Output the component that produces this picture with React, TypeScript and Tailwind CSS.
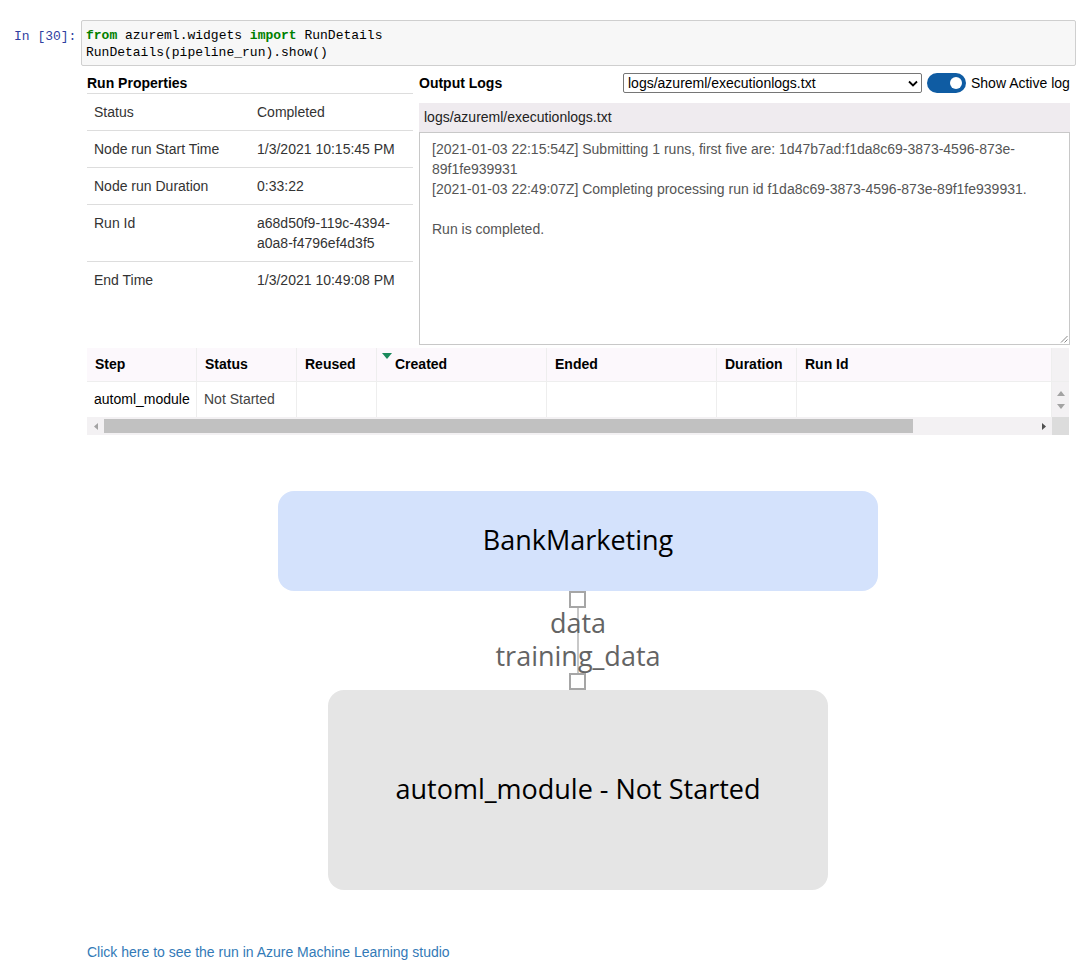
import type { ReactNode } from 'react'

// ─── Data ────────────────────────────────────────────────
const RUN_PROPS: [string, ReactNode][] = [
  ['Status', 'Completed'],
  ['Node run Start Time', '1/3/2021 10:15:45 PM'],
  ['Node run Duration', '0:33:22'],
  ['Run Id', <>a68d50f9-119c-4394-<br />a0a8-f4796ef4d3f5</>],
  ['End Time', '1/3/2021 10:49:08 PM'],
]

const COLUMNS = [
  { name: 'Step', w: 'w-[110px]' },
  { name: 'Status', w: 'w-[100px]' },
  { name: 'Reused', w: 'w-[80px]' },
  { name: 'Created', w: 'w-[170px]', sorted: true },
  { name: 'Ended', w: 'w-[170px]' },
  { name: 'Duration', w: 'w-[80px]' },
  { name: 'Run Id', w: 'w-[255px]' },
]

const ROW = ['automl_module', 'Not Started', '', '', '', '', '']

// ─── Code cell ───────────────────────────────────────────
function CodeCell() {
  return (
    <div className="flex font-['Liberation_Mono',monospace] text-[13px] leading-[17px]">
      <div className="w-[81px] shrink-0 pl-[14px] pt-[8px] text-[#303f9f]">In&nbsp;[30]:</div>
      <div className="w-[995px] border border-[#cfcfcf] bg-[#f7f7f7] rounded-[2px] px-[4px] pt-[6px] pb-[4px] text-black whitespace-pre">
        <div><span className="text-[#008000] font-bold">from</span> azureml.widgets <span className="text-[#008000] font-bold">import</span> RunDetails</div>
        <div>RunDetails(pipeline_run).show()</div>
      </div>
    </div>
  )
}

// ─── Run properties ─────────────────────────────────────
function RunProperties() {
  return (
    <div className="w-[326px] shrink-0">
      <div className="h-[21px] leading-[20px] font-bold text-black border-b border-[#ddd]">Run Properties</div>
      {RUN_PROPS.map(([k, v], i) => (
        <div key={k} className={`flex py-2 leading-[20px] text-[#333] ${i < RUN_PROPS.length - 1 ? 'border-b border-[#ddd]' : ''}`}>
          <div className="w-[170px] pl-[7px]">{k}</div>
          <div className="flex-1">{v}</div>
        </div>
      ))}
    </div>
  )
}

// ─── Output logs ────────────────────────────────────────
function OutputLogs() {
  return (
    <div className="w-[651px] shrink-0 flex flex-col">
      <div className="flex items-center h-[20px]">
        <div className="font-bold text-black w-[204px]">Output Logs</div>
        <div className="w-[299px] h-[20px] border border-[#767676] rounded-[2px] flex items-center justify-between pl-[4px] pr-[3px] text-black bg-white">
          <span>logs/azureml/executionlogs.txt</span>
          <svg width="10" height="7" viewBox="0 0 10 7" fill="none" stroke="#000" strokeWidth="1.8">
            <path d="M1 1.5l4 4 4-4" />
          </svg>
        </div>
        <div className="ml-[5px] w-[39px] h-[20px] rounded-full bg-[#0f5ca3] relative shrink-0">
          <div className="absolute right-[4px] top-[4px] w-[12px] h-[12px] rounded-full bg-white" />
        </div>
        <div className="ml-[5px] whitespace-nowrap text-black">Show Active log</div>
      </div>
      <div className="mt-[10px] h-[29px] bg-[#efebef] pl-[5px] leading-[29px] text-[#222]">logs/azureml/executionlogs.txt</div>
      <div className="relative h-[213px] border border-[#c8c8c8] bg-white pl-[12px] pt-[6px] pr-[40px] leading-[20px] text-[#555]">
        <div>[2021-01-03 22:15:54Z] Submitting 1 runs, first five are: 1d47b7ad:f1da8c69-3873-4596-873e-89f1fe939931</div>
        <div>[2021-01-03 22:49:07Z] Completing processing run id f1da8c69-3873-4596-873e-89f1fe939931.</div>
        <div className="h-[20px]" />
        <div>Run is completed.</div>
        <svg className="absolute right-[1px] bottom-[1px]" width="8" height="8" viewBox="0 0 8 8" stroke="#888" strokeWidth="1">
          <path d="M1 7.5L7.5 1M4.5 7.5L7.5 4.5" />
        </svg>
      </div>
    </div>
  )
}

// ─── Steps grid ─────────────────────────────────────────
function StepsGrid() {
  return (
    <div className="mt-[3px] w-[982px] text-[14px]">
      <div className="flex h-[34px] bg-[#fcf8fc] border-b border-[#eee]">
        {COLUMNS.map(c => (
          <div key={c.name} className={`${c.w} relative border-r border-[#eee] last:border-r-0 flex items-center font-bold text-black ${c.sorted ? 'pl-[18px]' : 'pl-[8px]'}`}>
            {c.sorted && (
              <svg className="absolute left-[5px] top-[5px]" width="10" height="6" viewBox="0 0 10 6">
                <path d="M0 0h10L5 6z" fill="#1a8a5c" />
              </svg>
            )}
            {c.name}
          </div>
        ))}
        <div className="w-[17px] bg-[#f3f1f3]" />
      </div>
      <div className="flex h-[35px] bg-white">
        {COLUMNS.map((c, i) => (
          <div key={c.name} className={`${c.w} border-r border-[#eee] flex items-center pl-[7px] ${i === 1 ? 'text-[#444]' : 'text-black'}`}>
            {ROW[i]}
          </div>
        ))}
        <div className="w-[17px] bg-[#f3f1f3] flex flex-col items-center justify-center gap-[8px]">
          <svg width="8" height="5" viewBox="0 0 8 5"><path d="M0 5h8L4 0z" fill="#a3a3a3" /></svg>
          <svg width="8" height="5" viewBox="0 0 8 5"><path d="M0 0h8L4 5z" fill="#a3a3a3" /></svg>
        </div>
      </div>
      <div className="flex h-[18px] bg-[#f3f1f3]">
        <div className="w-[17px] flex items-center justify-center">
          <svg width="4" height="7" viewBox="0 0 4 7"><path d="M4 0v7L0 3.5z" fill="#a3a3a3" /></svg>
        </div>
        <div className="flex-1 flex items-center">
          <div className="w-[809px] h-[14px] bg-[#c1c1c1]" />
        </div>
        <div className="w-[17px] flex items-center justify-center">
          <svg width="4" height="7" viewBox="0 0 4 7"><path d="M0 0v7L4 3.5z" fill="#505050" /></svg>
        </div>
        <div className="w-[17px] bg-[#dcdcdc]" />
      </div>
    </div>
  )
}

// ─── Pipeline graph ─────────────────────────────────────
function Port() {
  return <div className="w-[17px] h-[17px] border-2 border-[#a6a6a6] bg-white relative z-10" />
}

function PipelineGraph() {
  return (
    <div className="w-[982px] mt-[56px] flex flex-col items-center font-['Open_Sans',sans-serif] font-medium">
      <div className="w-[600px] h-[100px] rounded-[16px] bg-[#d4e2fc] flex items-center justify-center pb-[2px] text-[27px] text-black">
        BankMarketing
      </div>
      <div className="relative flex flex-col items-center">
        <div className="absolute left-1/2 -translate-x-1/2 top-0 bottom-0 w-[2px] bg-[#c8c8c8]" />
        <Port />
        <div className="relative text-[27px] leading-[33px] text-[#646464] text-center h-[65px] -top-[2px]">
          <div>data</div>
          <div>training_data</div>
        </div>
        <Port />
      </div>
      <div className="w-[500px] h-[200px] rounded-[16px] bg-[#e5e5e5] flex items-center justify-center pb-[2px] text-[27px] text-black">
        automl_module - Not Started
      </div>
    </div>
  )
}

export default function App() {
  return (
    <div className="w-[1089px] h-[970px] bg-white pt-[20px] font-['Liberation_Sans',Arial,sans-serif] text-[14px] overflow-hidden">
      <CodeCell />
      <div className="pl-[87px] mt-[7px]">
        <div className="flex gap-[6px]">
          <RunProperties />
          <OutputLogs />
        </div>
        <StepsGrid />
        <PipelineGraph />
        <div className="mt-[52px] text-[#337ab7] leading-[20px]">Click here to see the run in Azure Machine Learning studio</div>
      </div>
    </div>
  )
}
